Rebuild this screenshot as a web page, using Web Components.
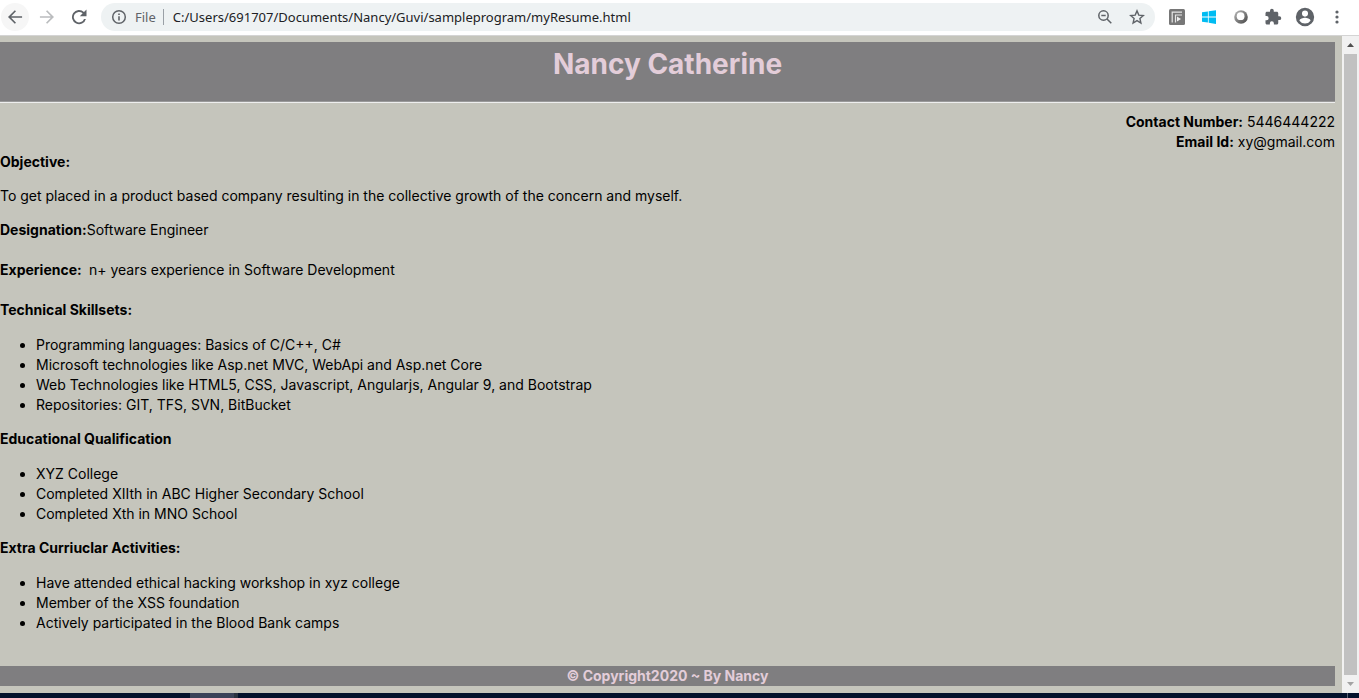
<!DOCTYPE html>
<html lang="en">
<head>
<meta charset="utf-8">
<title>myResume</title>
<style>
  html, body { height: 100%; }
  body { margin: 0; }
</style>
</head>
<body>
<resume-window>
  <browser-bar slot="bar" url="C:/Users/691707/Documents/Nancy/Guvi/sampleprogram/myResume.html"></browser-bar>
  <resume-page name="Nancy Catherine">
    <contact-line slot="contact" label="Contact Number:">5446444222</contact-line>
    <contact-line slot="contact" label="Email Id:">xy@gmail.com</contact-line>
    <resume-field label="Objective:" stacked>To get placed in a product based company resulting in the collective growth of the concern and myself.</resume-field>
    <resume-field label="Designation:">Software Engineer</resume-field>
    <resume-field label="Experience:&nbsp;">&nbsp;n+ years experience in Software Development</resume-field>
    <resume-list label="Technical Skillsets:" items="Programming languages: Basics of C/C++, C#|Microsoft technologies like Asp.net MVC, WebApi and Asp.net Core|Web Technologies like HTML5, CSS, Javascript, Angularjs, Angular 9, and Bootstrap|Repositories: GIT, TFS, SVN, BitBucket"></resume-list>
    <resume-list label="Educational Qualification" items="XYZ College|Completed XIIth in ABC Higher Secondary School|Completed Xth in MNO School"></resume-list>
    <resume-list label="Extra Curriuclar Activities:" items="Have attended ethical hacking workshop in xyz college|Member of the XSS foundation|Actively participated in the Blood Bank camps"></resume-list>
    <span slot="footer">© Copyright2020 ~ By Nancy</span>
  </resume-page>
  <scroll-rail slot="rail"></scroll-rail>
  <task-strip slot="strip"></task-strip>
</resume-window>

<script>
class Base extends HTMLElement {
  constructor() { super(); this.attachShadow({ mode: 'open' }); }
  connectedCallback() { this.shadowRoot.innerHTML = this.render(); }
  attr(n) { return this.getAttribute(n) || ''; }
}

customElements.define('resume-window', class extends Base {
  render() { return `
    <style>
      :host { display: flex; flex-direction: column; min-height: 100%; background: #c5c5bc; }
      .view { flex: 1; display: flex; }
    </style>
    <slot name="bar"></slot>
    <div class="view"><slot></slot><slot name="rail"></slot></div>
    <slot name="strip"></slot>`; }
});

customElements.define('browser-bar', class extends Base {
  render() { return `
    <style>
      :host { display: block; background: #fff; border-bottom: 1px solid #d4d4d4; font: 13px/20px "Noto Sans", sans-serif; color: #202124; }
      nav { display: flex; align-items: center; gap: 4px; padding: 3px 8px 4px 1px; }
      button { width: 28px; height: 28px; padding: 0; border: 0; border-radius: 50%; background: none; display: grid; place-items: center; flex: none; color: #5f6368; }
      .back { background: #f6f6f6; }
      .off { color: #babcbe; }
      svg { display: block; fill: currentColor; }
      .pill { flex: 1; min-width: 0; display: flex; align-items: center; height: 28px; margin: 0 4px; padding: 0 4px 0 10px; border-radius: 14px; background: #eef2f3; box-sizing: border-box; gap: 4px; color: #5f6368; }
      label { display: flex; align-items: center; flex: 1; min-width: 0; }
      label svg { flex: none; margin-right: 8px; }
      .bar { width: 1px; height: 16px; background: #9aa0a6; margin: 0 9px 0 7px; flex: none; }
      input { flex: 1; min-width: 0; border: 0; padding: 0; background: none; font: inherit; color: #202124; outline: 0; }
    </style>
    <nav>
      <button class="back" aria-label="Back"><svg width="20" height="20" viewBox="0 0 24 24"><path d="M20.500 11H7.400l5.800-5.800L11.800 3.800 3.600 12l8.200 8.200 1.400-1.400L7.400 13h13.100z"/></svg></button>
      <button class="off" aria-label="Forward"><svg width="20" height="20" viewBox="0 0 24 24"><path d="M3.500 11h13.100l-5.800-5.800 1.400-1.400 8.200 8.200-8.200 8.200-1.400-1.400 5.800-5.800H3.500z"/></svg></button>
      <button aria-label="Reload"><svg width="20" height="20" viewBox="0 0 24 24"><path d="M18 6A8.500 8.500 0 1 0 20.300 14.300H18A6.300 6.300 0 1 1 16.400 7.600L13 11h8V3z"/></svg></button>
      <div class="pill">
        <label>
          <svg width="16" height="16" viewBox="0 0 16 16"><circle cx="8" cy="8" r="6.300" fill="none" stroke="currentColor" stroke-width="1.500"/><path d="M7.200 7.200h1.600v4.300H7.200zM7.200 4.500h1.600v1.600H7.200z"/></svg>
          <span>File</span><span class="bar"></span>
          <input type="text" aria-label="Address" value="${this.attr('url')}">
        </label>
        <button aria-label="Zoom"><svg width="16" height="16" viewBox="0 0 16 16" style="fill:none;stroke:currentColor;stroke-width:1.500"><circle cx="6.500" cy="6.500" r="4.700"/><path d="M10 10l4.300 4.300M4.300 6.500h4.400"/></svg></button>
        <button aria-label="Bookmark"><svg width="16" height="16" viewBox="0 0 16 16" style="fill:none;stroke:currentColor;stroke-width:1.400"><path d="M8 1.900l1.800 4.200 4.500.4-3.400 3 1 4.500L8 11.600 4.100 14l1-4.500-3.400-3 4.500-.4z"/></svg></button>
      </div>
      <button aria-label="Reader extension"><svg width="16" height="16" viewBox="0 0 16 16"><rect width="16" height="16" rx="1.500" fill="#777"/><path d="M3.200 13.500V3.200H13M6.500 13.500V6H13" fill="none" stroke="#e6e6e6" stroke-width="1.200"/><path d="M8 7.500l4 2.500-4 2.600z" fill="#eee"/></svg></button>
      <button aria-label="Windows extension"><svg width="16" height="16" viewBox="0 0 16 16" fill="#00bcf2" style="fill:#00bcf2"><path d="M1 3.300l5.900-.9v5.200H1zM7.700 2.300L15 1.200v6.400H7.700zM1 8.400h5.900v5.200L1 12.800zM7.700 8.400H15v6.500l-7.300-1.100z"/></svg></button>
      <button aria-label="Ring extension"><svg width="16" height="16" viewBox="0 0 16 16"><defs><linearGradient id="g" x1="0" y1="0" x2="1" y2="1"><stop offset="0" stop-color="#bbb"/><stop offset="1" stop-color="#444"/></linearGradient></defs><circle cx="8" cy="8" r="6.800" fill="url(#g)"/><circle cx="7.600" cy="7.200" r="3.900" fill="#fff"/></svg></button>
      <button aria-label="Extensions"><svg width="18" height="18" viewBox="0 0 24 24"><path d="M20.500 11H19V7c0-1.100-.9-2-2-2h-4V3.500a2.500 2.500 0 0 0-5 0V5H4c-1.100 0-2 .9-2 2v3.800h1.500a2.700 2.700 0 0 1 0 5.400H2V20c0 1.100.9 2 2 2h3.800v-1.500a2.700 2.700 0 0 1 5.400 0V22H17c1.100 0 2-.9 2-2v-4h1.500a2.500 2.500 0 0 0 0-5z"/></svg></button>
      <button aria-label="Profile"><svg width="22" height="22" viewBox="0 0 24 24"><path fill-rule="evenodd" d="M12 2a10 10 0 1 0 0 20 10 10 0 0 0 0-20zm0 3a3.300 3.300 0 1 1 0 6.600A3.300 3.300 0 0 1 12 5zm0 14.200a7.200 7.200 0 0 1-6-3.200c0-2 4-3.100 6-3.100s6 1.100 6 3.100a7.200 7.200 0 0 1-6 3.200z"/></svg></button>
      <button aria-label="Menu"><svg width="16" height="16" viewBox="0 0 16 16"><circle cx="8" cy="3" r="1.600"/><circle cx="8" cy="8" r="1.600"/><circle cx="8" cy="13" r="1.600"/></svg></button>
    </nav>`; }
});

customElements.define('resume-page', class extends Base {
  render() { return `
    <style>
      :host { display: flex; flex-direction: column; flex: 1; min-width: 0; padding: 6px 7px 7px 0; font: 14px/20px Inter, sans-serif; color: #000; }
      header, footer { background: #7f7e80; color: #e3cdd9; text-align: center; font-weight: 700; }
      header { padding: 4px 0 19px; }
      h1 { margin: 0; font-size: 28px; line-height: 36px; }
      hr { margin: 0 0 9px; border: 0; border-top: 1px solid #9a9a9a; border-bottom: 1px solid #eee; width: 100%; }
      address { font-style: normal; text-align: right; }
      main { flex: 1; }
    </style>
    <header><h1>${this.attr('name')}</h1></header>
    <hr>
    <address><slot name="contact"></slot></address>
    <main><slot></slot></main>
    <footer><slot name="footer"></slot></footer>`; }
});

customElements.define('contact-line', class extends Base {
  render() { return `
    <style>:host { display: block; }</style>
    <b>${this.attr('label')}</b>&nbsp;<slot></slot>`; }
});

customElements.define('resume-field', class extends Base {
  render() {
    const label = `<b>${this.attr('label')}</b>`;
    return `
    <style>
      :host { display: block; margin-bottom: 20px; }
      :host([stacked]) { margin-bottom: 14px; }
      p { margin: 14px 0 0; }
    </style>` + (this.hasAttribute('stacked') ? `${label}<p><slot></slot></p>` : `${label}<slot></slot>`); }
});

customElements.define('resume-list', class extends Base {
  render() { return `
    <style>
      :host { display: block; }
      h2 { margin: 0; font-size: 14px; line-height: 20px; }
      ul { margin: 15px 0 14px; padding-left: 36px; }
    </style>
    <h2>${this.attr('label')}</h2>
    <ul>${this.attr('items').split('|').map(t => `<li>${t}</li>`).join('')}</ul>`; }
});

customElements.define('scroll-rail', class extends Base {
  render() { return `
    <style>
      :host { display: flex; flex-direction: column; width: 17px; background: #f1f1f1; box-sizing: border-box; padding: 0 2px; }
      svg { display: block; width: 13px; height: 18px; }
      .thumb { flex: 1; background: #c1c1c1; }
    </style>
    <svg viewBox="0 0 13 18"><path d="M3 11l3.500-4 3.500 4z" fill="#505050"/></svg>
    <div class="thumb"></div>
    <svg viewBox="0 0 13 18"><path d="M3 7l3.500 4L10 7z" fill="#a3a3a3"/></svg>`; }
});

customElements.define('task-strip', class extends Base {
  render() { return `
    <style>
      :host { display: flex; height: 5px; background: #03122c; }
      i { flex: none; margin-left: 14%; width: 44px; background: #3a4258; }
      b { flex: none; width: 4px; background: #2a3240; }
      u { width: 1px; margin: 0 11px 0 auto; background: #596273; }
    </style>
    <i></i><b></b><u></u>`; }
});
</script>
</body>
</html>
